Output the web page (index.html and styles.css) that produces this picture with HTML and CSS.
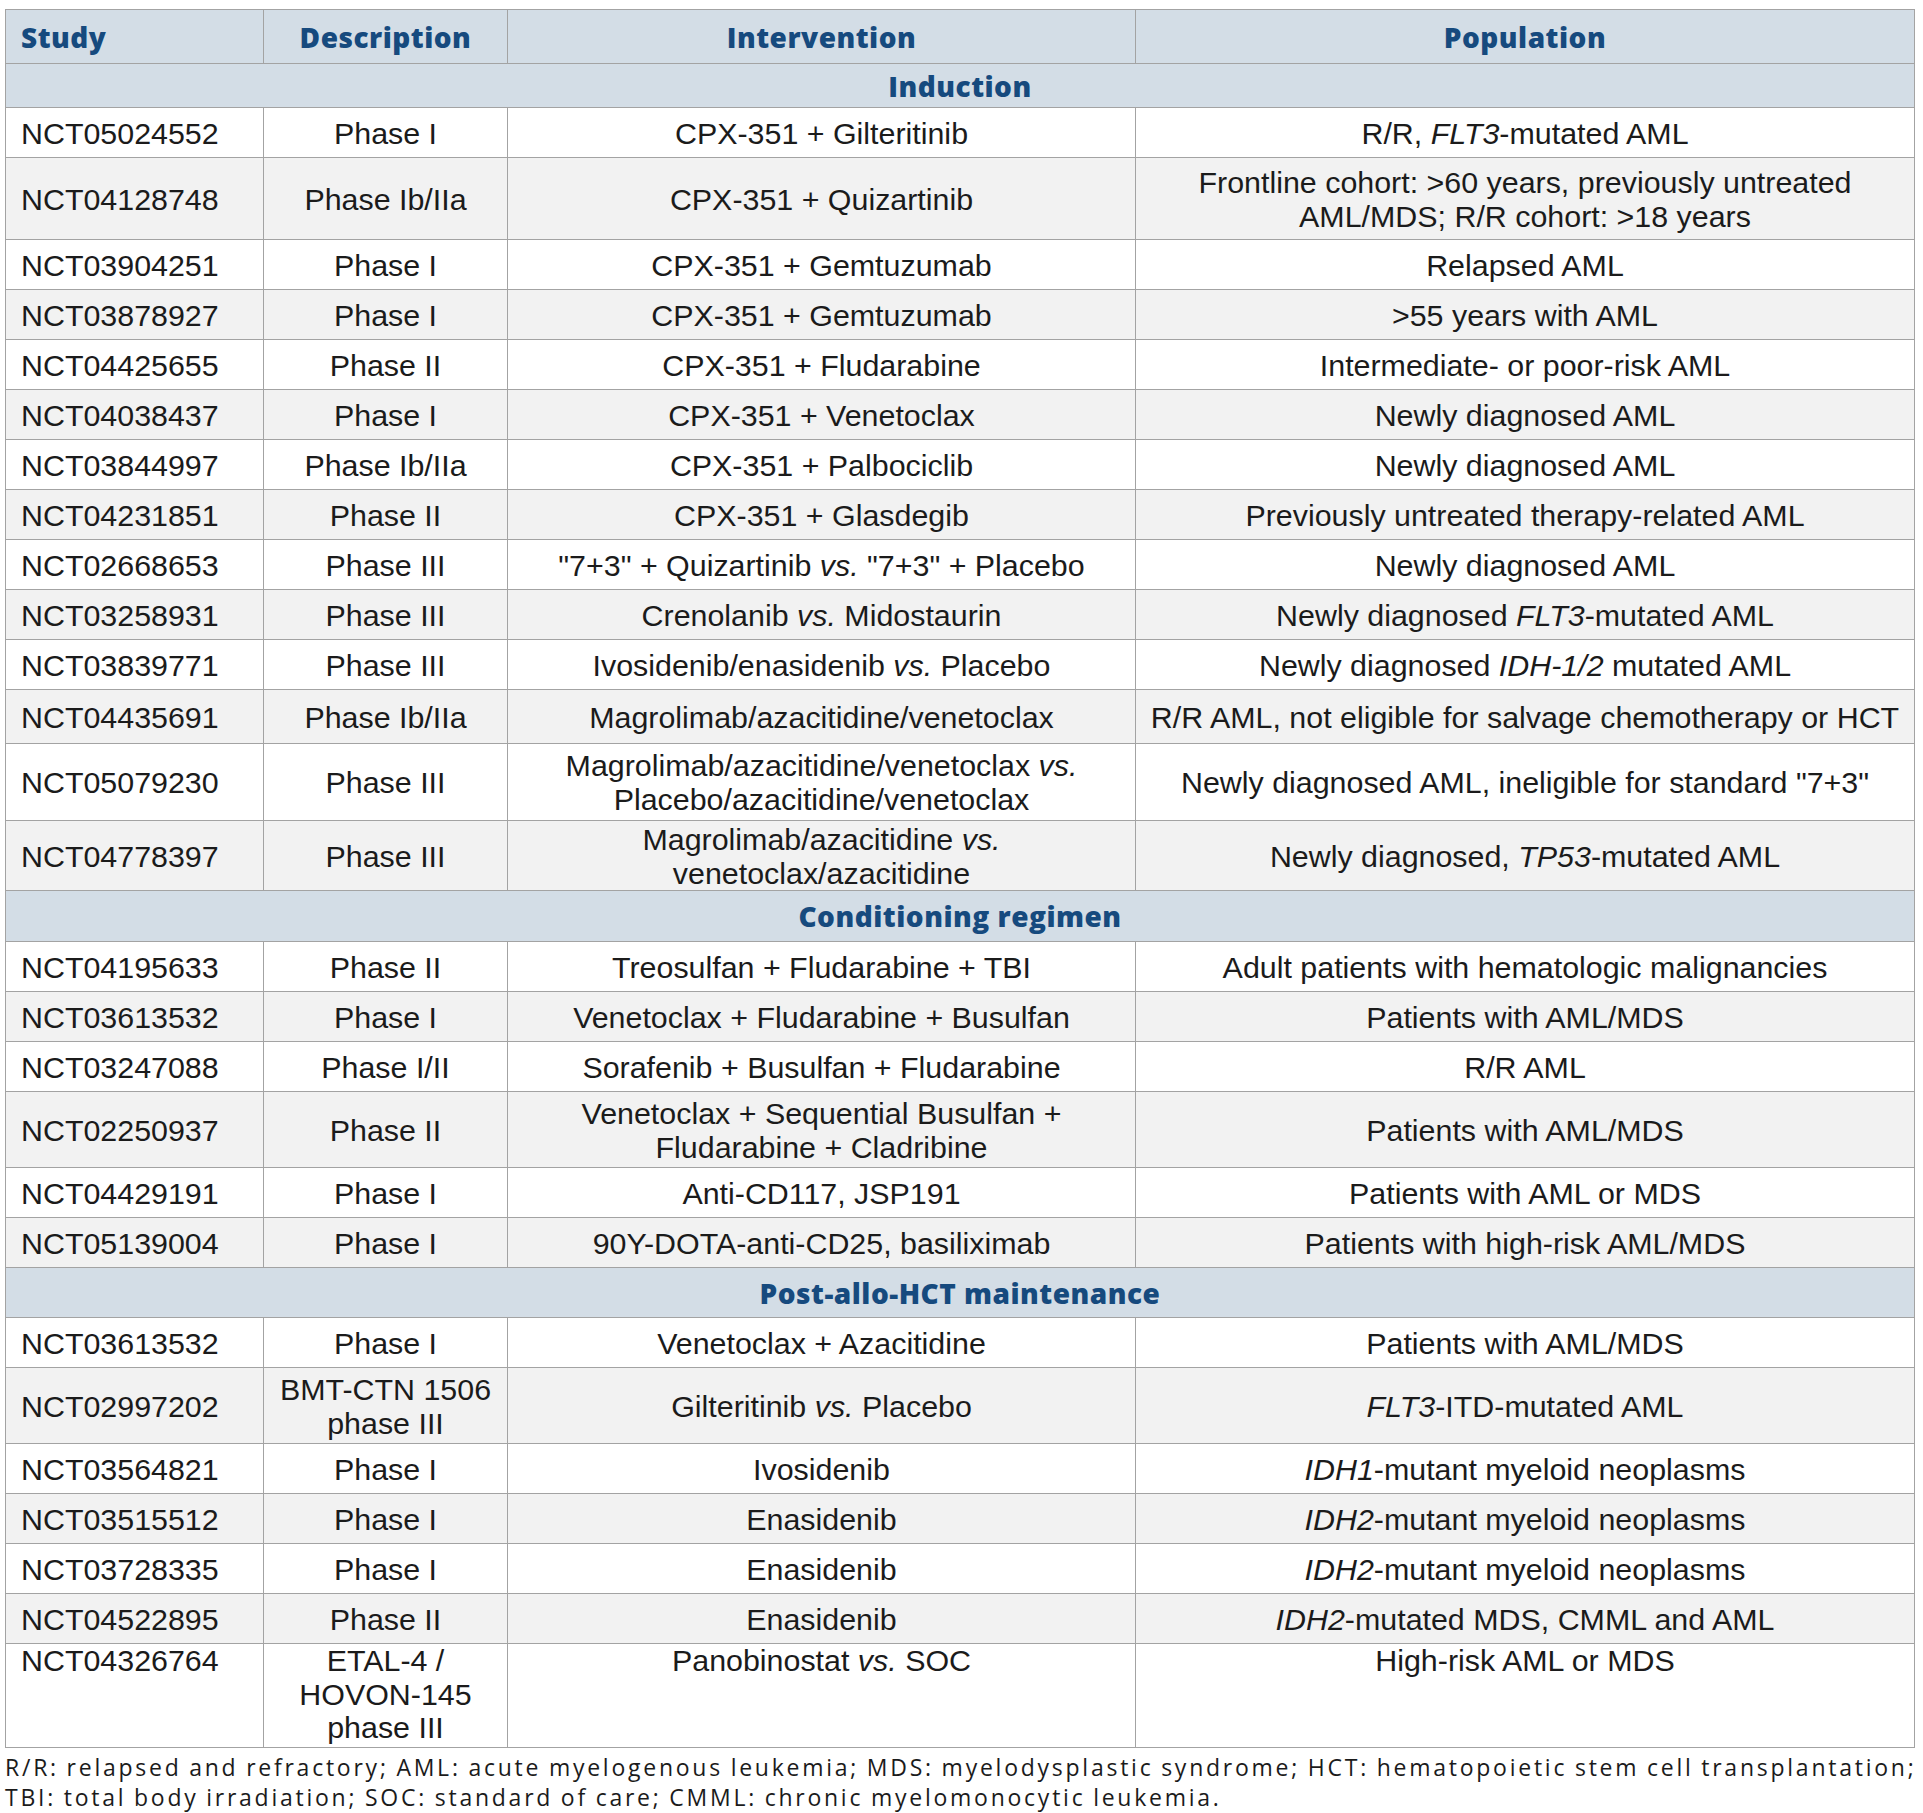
FILE: index.html
```html
<!DOCTYPE html>
<html lang="en">
<head>
<meta charset="utf-8">
<title>Clinical trials</title>
<link rel="stylesheet" href="styles.css">
</head>
<body>
<div class="page">
<table class="trials">
<colgroup><col class="c1"><col class="c2"><col class="c3"><col class="c4"></colgroup>
<thead>
<tr class="head"><th class="first">Study</th><th>Description</th><th>Intervention</th><th>Population</th></tr>
</thead>
<tbody>
<tr class="section s44"><th colspan="4">Induction</th></tr>
<tr class="h50"><td>NCT05024552</td><td>Phase I</td><td>CPX-351 + Gilteritinib</td><td>R/R, <i>FLT3</i>-mutated AML</td></tr>
<tr class="h82 alt"><td>NCT04128748</td><td>Phase Ib/IIa</td><td>CPX-351 + Quizartinib</td><td>Frontline cohort: &gt;60 years, previously untreated<br>AML/MDS; R/R cohort: &gt;18 years</td></tr>
<tr class="h50"><td>NCT03904251</td><td>Phase I</td><td>CPX-351 + Gemtuzumab</td><td>Relapsed AML</td></tr>
<tr class="h50 alt"><td>NCT03878927</td><td>Phase I</td><td>CPX-351 + Gemtuzumab</td><td>&gt;55 years with AML</td></tr>
<tr class="h50"><td>NCT04425655</td><td>Phase II</td><td>CPX-351 + Fludarabine</td><td>Intermediate- or poor-risk AML</td></tr>
<tr class="h50 alt"><td>NCT04038437</td><td>Phase I</td><td>CPX-351 + Venetoclax</td><td>Newly diagnosed AML</td></tr>
<tr class="h50"><td>NCT03844997</td><td>Phase Ib/IIa</td><td>CPX-351 + Palbociclib</td><td>Newly diagnosed AML</td></tr>
<tr class="h50 alt"><td>NCT04231851</td><td>Phase II</td><td>CPX-351 + Glasdegib</td><td>Previously untreated therapy-related AML</td></tr>
<tr class="h50"><td>NCT02668653</td><td>Phase III</td><td>"7+3" + Quizartinib <i>vs.</i> "7+3" + Placebo</td><td>Newly diagnosed AML</td></tr>
<tr class="h50 alt"><td>NCT03258931</td><td>Phase III</td><td>Crenolanib <i>vs.</i> Midostaurin</td><td>Newly diagnosed <i>FLT3</i>-mutated AML</td></tr>
<tr class="h50"><td>NCT03839771</td><td>Phase III</td><td>Ivosidenib/enasidenib <i>vs.</i> Placebo</td><td>Newly diagnosed <i>IDH-1/2</i> mutated AML</td></tr>
<tr class="h54 alt"><td>NCT04435691</td><td>Phase Ib/IIa</td><td>Magrolimab/azacitidine/venetoclax</td><td class="tight">R/R AML, not eligible for salvage chemotherapy or HCT</td></tr>
<tr class="h77"><td>NCT05079230</td><td>Phase III</td><td>Magrolimab/azacitidine/venetoclax <i>vs.</i><br>Placebo/azacitidine/venetoclax</td><td class="tight">Newly diagnosed AML, ineligible for standard "7+3"</td></tr>
<tr class="h70 alt"><td>NCT04778397</td><td>Phase III</td><td>Magrolimab/azacitidine <i>vs.</i><br>venetoclax/azacitidine</td><td>Newly diagnosed, <i>TP53</i>-mutated AML</td></tr>
<tr class="section s51"><th colspan="4">Conditioning regimen</th></tr>
<tr class="h50"><td>NCT04195633</td><td>Phase II</td><td>Treosulfan + Fludarabine + TBI</td><td>Adult patients with hematologic malignancies</td></tr>
<tr class="h50 alt"><td>NCT03613532</td><td>Phase I</td><td>Venetoclax + Fludarabine + Busulfan</td><td>Patients with AML/MDS</td></tr>
<tr class="h50"><td>NCT03247088</td><td>Phase I/II</td><td>Sorafenib + Busulfan + Fludarabine</td><td>R/R AML</td></tr>
<tr class="h76 alt"><td>NCT02250937</td><td>Phase II</td><td>Venetoclax + Sequential Busulfan +<br>Fludarabine + Cladribine</td><td>Patients with AML/MDS</td></tr>
<tr class="h50"><td>NCT04429191</td><td>Phase I</td><td>Anti-CD117, JSP191</td><td>Patients with AML or MDS</td></tr>
<tr class="h50 alt"><td>NCT05139004</td><td>Phase I</td><td>90Y-DOTA-anti-CD25, basiliximab</td><td>Patients with high-risk AML/MDS</td></tr>
<tr class="section s50"><th colspan="4">Post-allo-HCT maintenance</th></tr>
<tr class="h50"><td>NCT03613532</td><td>Phase I</td><td>Venetoclax + Azacitidine</td><td>Patients with AML/MDS</td></tr>
<tr class="h76 alt"><td>NCT02997202</td><td>BMT-CTN 1506<br>phase III</td><td>Gilteritinib <i>vs.</i> Placebo</td><td><i>FLT3</i>-ITD-mutated AML</td></tr>
<tr class="h50"><td>NCT03564821</td><td>Phase I</td><td>Ivosidenib</td><td><i>IDH1</i>-mutant myeloid neoplasms</td></tr>
<tr class="h50 alt"><td>NCT03515512</td><td>Phase I</td><td>Enasidenib</td><td><i>IDH2</i>-mutant myeloid neoplasms</td></tr>
<tr class="h50"><td>NCT03728335</td><td>Phase I</td><td>Enasidenib</td><td><i>IDH2</i>-mutant myeloid neoplasms</td></tr>
<tr class="h50 alt"><td>NCT04522895</td><td>Phase II</td><td>Enasidenib</td><td><i>IDH2</i>-mutated MDS, CMML and AML</td></tr>
<tr class="h104 top"><td>NCT04326764</td><td>ETAL-4 /<br>HOVON-145<br>phase III</td><td>Panobinostat <i>vs.</i> SOC</td><td>High-risk AML or MDS</td></tr>
</tbody>
</table>
<p class="note">R/R: relapsed and refractory; AML: acute myelogenous leukemia; MDS: myelodysplastic syndrome; HCT: hematopoietic stem cell transplantation;<br>TBI: total body irradiation; SOC: standard of care; CMML: chronic myelomonocytic leukemia.</p>
</div>
</body>
</html>
```

FILE: styles.css
```css
html, body {
  margin: 0;
  padding: 0;
  background: #ffffff;
}

.page {
  padding: 9px 0 0 5px;
}

.trials {
  border-collapse: collapse;
  table-layout: fixed;
  width: 1909px;
  font-family: "Liberation Sans", Arial, sans-serif;
  font-size: 30.4px;
  line-height: 34px;
  color: #1b1b1b;
}

.c1 { width: 258px; }
.c2 { width: 244px; }
.c3 { width: 628px; }
.c4 { width: 779px; }

.trials th,
.trials td {
  border: 1px solid #a3a3a3;
  padding: 0 4px;
  text-align: center;
  vertical-align: middle;
}

.trials td:first-child {
  text-align: left;
  padding-left: 15px;
}

.trials td.tight {
  padding: 0;
  white-space: nowrap;
}

.head th,
.section th {
  background: #d3dde6;
  color: #164a7e;
  font-family: "Open Sans", "Noto Sans", sans-serif;
  font-weight: 800;
  font-size: 28px;
  letter-spacing: 0.5px;
}

.head th.first {
  text-align: left;
  padding-left: 15px;
}

.head { height: 54px; }
.s44 { height: 44px; }
.s51 { height: 51px; }
.s50 { height: 50px; }
.h50 { height: 50px; }
.h54 { height: 54px; }
.h70 { height: 70px; }
.h76 { height: 76px; }
.h77 { height: 77px; }
.h82 { height: 82px; }
.h104 { height: 104px; }

.alt td { background: #f2f2f2; }

.top td {
  vertical-align: top;
  line-height: 33.5px;
}

.note {
  margin: 4px 0 0 0;
  font-family: "Open Sans", "Noto Sans", sans-serif;
  font-size: 23px;
  line-height: 30px;
  letter-spacing: 2.75px;
  word-spacing: -1px;
  color: #1b1b1b;
  white-space: nowrap;
}
```
